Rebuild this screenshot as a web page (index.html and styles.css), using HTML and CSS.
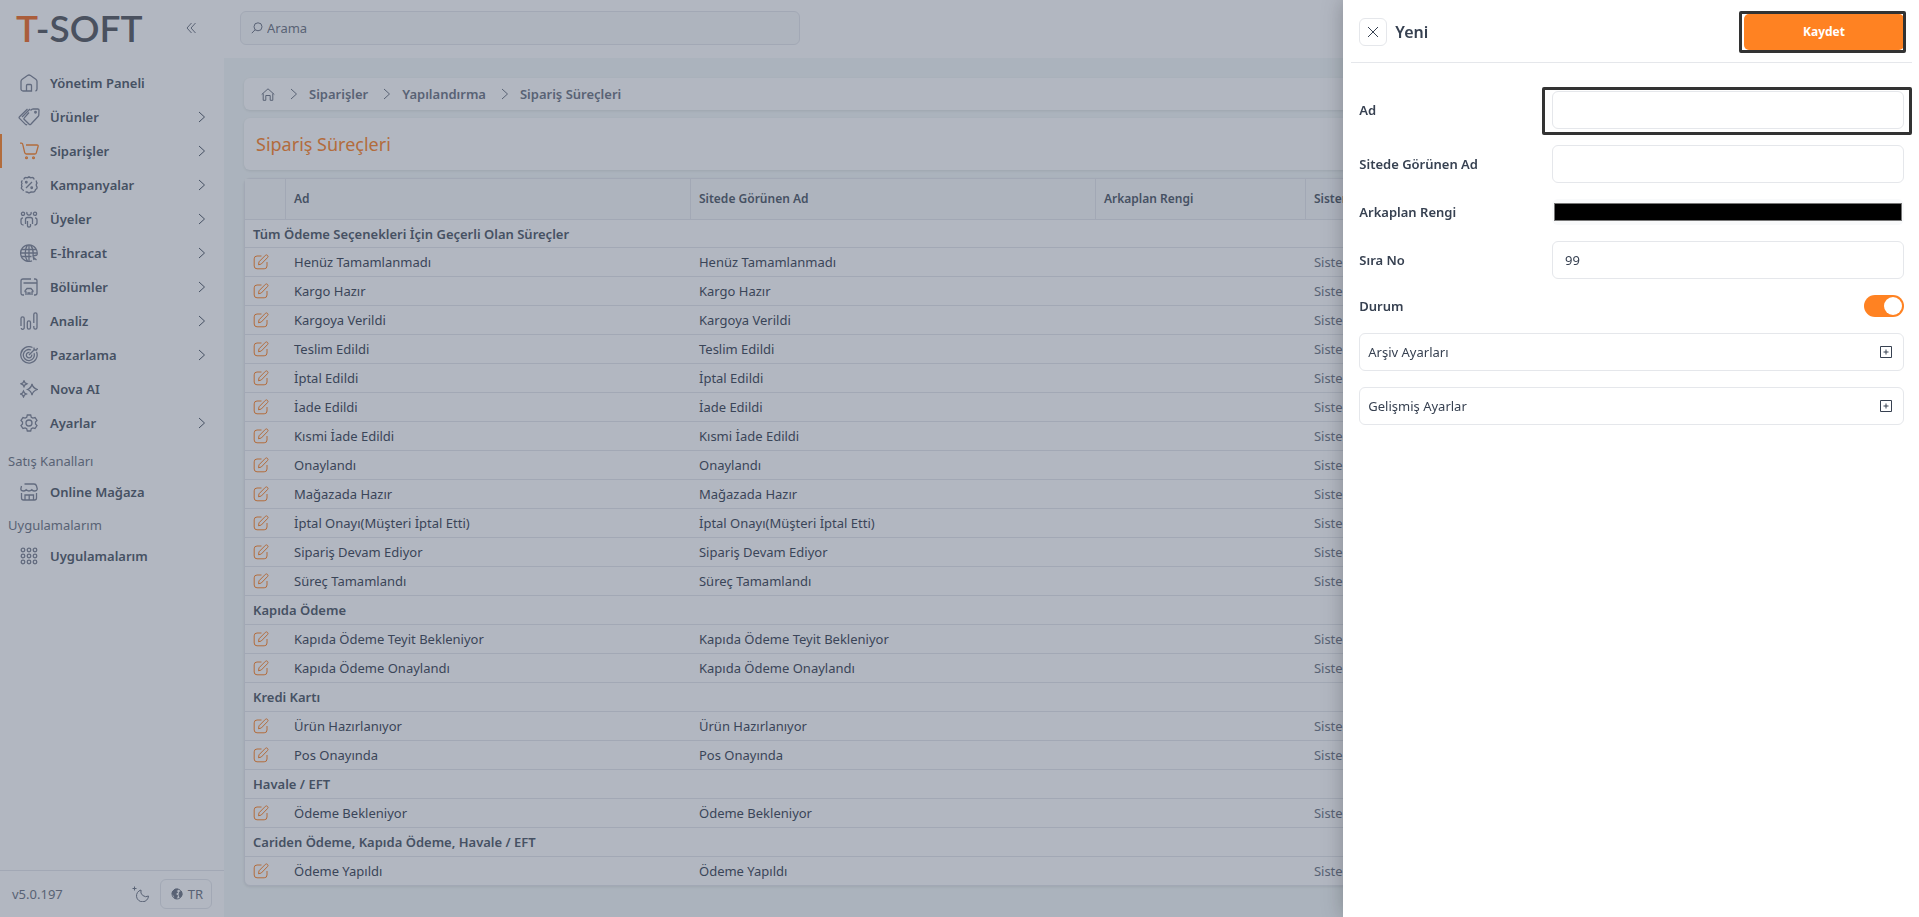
FILE: index.html
```
<!DOCTYPE html>
<html lang="tr">
<head>
    <meta charset="UTF-8">
    <meta name="viewport" content="width=device-width, initial-scale=1.0">
    <title>Sipariş Süreçleri</title>
    <link rel="stylesheet" href="styles.css">
</head>
<body>
    <svg class="sprite" aria-hidden="true">
        <symbol id="edit" viewBox="0 0 16 16">
            <path d="M8.500 2H4a2.800 2.800 0 0 0-2.800 2.800V12A2.800 2.800 0 0 0 4 14.800h7.200A2.800 2.800 0 0 0 14 12V8"/>
            <path d="M5.500 10.800l.5-3L12.300 1.400a1.500 1.500 0 0 1 2.200 2.200L8.300 10z"/>
        </symbol>
        <symbol id="chevron" viewBox="0 0 8 12"><path d="M1 1l5.500 5L1 11"/></symbol>
        <symbol id="plus" viewBox="0 0 14 14"><path d="M1.500 1.500h11v11h-11zM7 4.500v5M4.500 7h5"/></symbol>
    </svg>

    <div class="app">
        <aside class="sidebar">
            <div class="brand">
                <a href="#" class="logo"><span>T</span>-SOFT</a>
                <button class="collapse" aria-label="Menüyü daralt">
                    <svg viewBox="0 0 10 12" width="10" height="12"><path d="M5.500 1L1 6l4.500 5M9.500 1L5 6l4.500 5"/></svg>
                </button>
            </div>
            <nav class="menu">
                <a href="#" class="item">
                    <svg class="icon" viewBox="0 0 18 18"><path d="M4.500 17H3a2 2 0 0 1-2-2V7.500Q1 6 2.200 5.200L7.500 1.500Q9 .5 10.500 1.500l5.300 3.700Q17 6 17 7.500V15a2 2 0 0 1-1.500 2M6.500 17v-5.500a1 1 0 0 1 1-1h3a1 1 0 0 1 1 1V17H4.500"/></svg>
                    Yönetim Paneli
                </a>
                <a href="#" class="item">
                    <svg class="icon wide" viewBox="0 0 22 18"><path d="M12.500 2.500L14 1.200q.5-.4 1.200-.4L20 1q1 0 1 1l-.2 5q0 .7-.5 1.200l-7.500 8q-.8.8-1.600 0L6.300 11.500q-.8-.8 0-1.600L11 4.500M9.500 1L1.500 8.800q-.8.8 0 1.600l6 6q.8.8 1.600 0M12 1L4 9"/><circle cx="17.500" cy="4.300" r=".8"/></svg>
                    Ürünler
                    <svg class="arrow"><use href="#chevron"/></svg>
                </a>
                <a href="#" class="item active">
                    <svg class="icon wide" viewBox="0 0 22 18"><path d="M2 1.200h1.500q1 0 1.200 1l2 8.500q.3 1.300 1.500 1.300h8.600q1.200 0 1.500-1.200l1.800-6.300Q20.500 3 19 3H8"/><circle cx="8.500" cy="15.800" r=".9"/><circle cx="15.500" cy="15.800" r=".9"/></svg>
                    Siparişler
                    <svg class="arrow"><use href="#chevron"/></svg>
                </a>
                <a href="#" class="item">
                    <svg class="icon" viewBox="0 0 18 18"><path d="M4 3.500q0-2 2-2 1.500.8 3-.7 1.500 1.500 3 .7 2 0 2 2M16.500 4.500q-.5 1.500.5 2.500-1.500 2 0 4 .5 1.800-1.500 2.500-.3 2.500-2.500 2.700-2-.7-4 .8-2-1.500-3.500-.8M3.500 15q-.3-1.500-1.500-2-1.300-1 0-2.500-1-1.500 0-3-1.300-1.800.5-3M6 12l6-6"/><circle cx="6.300" cy="6.300" r=".8"/><circle cx="11.700" cy="11.700" r=".8"/></svg>
                    Kampanyalar
                    <svg class="arrow"><use href="#chevron"/></svg>
                </a>
                <a href="#" class="item">
                    <svg class="icon" viewBox="0 0 18 18"><circle cx="3" cy="3.800" r="1.600"/><circle cx="15" cy="3.800" r="1.600"/><path d="M7 2a2.200 2.200 0 1 0 4 0M3.500 15Q1 15 1 12.500V10q0-2.200 2-2.200M14.500 15q2.500 0 2.500-2.500V10q0-2.200-2-2.200M5.500 14V9.500q0-2 2-2h3q2 0 2 2V14M7.500 11v5q0 1 1.500 1t1.500-1v-2"/></svg>
                    Üyeler
                    <svg class="arrow"><use href="#chevron"/></svg>
                </a>
                <a href="#" class="item">
                    <svg class="icon" viewBox="0 0 18 18"><path d="M17 11A8.300 8.300 0 1 0 12 16.800M1.500 5.500h15M1.500 12.500h10M.8 9h16M7.500 1C4.500 5 4.500 13 7.500 17M10.500 1c2.500 3 3 7 2.500 11M9 1v16M13 13l3.500 3M17 11l-4 1 1 4"/></svg>
                    E-İhracat
                    <svg class="arrow"><use href="#chevron"/></svg>
                </a>
                <a href="#" class="item">
                    <svg class="icon" viewBox="0 0 18 18"><path d="M4 17H3q-2 0-2-2V3q0-2 2-2h8M14 1h1q2 0 2 2v12q0 2-2 2h-1M3.500 5H17M6 17v-3q-1.500 0-.8-1.500L7 10.500h4l1.800 2q.7 1.500-.8 1.500v3M8 17v-2h2v2"/></svg>
                    Bölümler
                    <svg class="arrow"><use href="#chevron"/></svg>
                </a>
                <a href="#" class="item">
                    <svg class="icon" viewBox="0 0 18 18"><path d="M1 14V6.500a1.500 1.500 0 0 1 3.200 0v9a1.500 1.500 0 0 1-3 .5M7.300 15.500v-5a1.600 1.600 0 0 1 3.200 0v5a1.600 1.600 0 0 1-3.200 0M13.800 11V2.500a1.500 1.500 0 0 1 3.200 0v13a1.500 1.500 0 0 1-3.200 0V14"/></svg>
                    Analiz
                    <svg class="arrow"><use href="#chevron"/></svg>
                </a>
                <a href="#" class="item">
                    <svg class="icon" viewBox="0 0 18 18"><path d="M12.500 1.500a8.200 8.200 0 1 0 4 4.200M11 4a5.500 5.500 0 1 0 3 3.200M9.500 6.500a2.700 2.700 0 1 0 2.200 2.200M9 9l6-6M14 1.500V4h2.500L17.500 2"/></svg>
                    Pazarlama
                    <svg class="arrow"><use href="#chevron"/></svg>
                </a>
                <a href="#" class="item">
                    <svg class="icon" viewBox="0 0 18 18"><path d="M4 .8l1 2 2 1-2 1-1 2-1-2-2-1 2-1zM3.500 11l1 2 2 1-2 1-1 2-1-2-2-1 2-1zM12 4q.8 4 5.500 5.500Q12.800 11 12 15q-.8-4-4.500-5.500Q11.200 8 12 4z"/></svg>
                    Nova AI
                </a>
                <a href="#" class="item">
                    <svg class="icon" viewBox="0 0 18 18"><circle cx="9" cy="9" r="3"/><path d="M7.300 1h3.400l.6 2.300 1.500.8L15 3.500l2 3L15.500 8v2l1.500 1.500-2 3-2.200-.6-1.500.8-.6 2.300H7.300l-.6-2.300-1.500-.8-2.200.6-2-3L2.500 10V8L1 6.500l2-3 2.200.6 1.500-.8z"/></svg>
                    Ayarlar
                    <svg class="arrow"><use href="#chevron"/></svg>
                </a>
                <h2>Satış Kanalları</h2>
                <a href="#" class="item">
                    <svg class="icon" viewBox="0 0 18 18"><path d="M4.500 1H14q2 0 2.500 2l.8 3q-.3 2-2.800 2-1.500 0-2.700-1.300Q10.500 8 9 8 7.500 8 6.200 6.700 5 8 3.500 8 1 8 .8 6l.7-3M1.500 10v5q0 2 2 2h11q2 0 2-2v-5M5 16.500V12h8.500v4.500M9.200 12v4.500"/></svg>
                    Online Mağaza
                </a>
                <h2>Uygulamalarım</h2>
                <a href="#" class="item">
                    <svg class="icon" viewBox="0 0 18 18"><circle cx="3" cy="3" r="1.800"/><circle cx="9" cy="3" r="1.800"/><circle cx="15" cy="3" r="1.800"/><circle cx="3" cy="9" r="1.800"/><circle cx="9" cy="9" r="1.800"/><circle cx="15" cy="9" r="1.800"/><circle cx="3" cy="15" r="1.800"/><circle cx="9" cy="15" r="1.800"/><circle cx="15" cy="15" r="1.800"/></svg>
                    Uygulamalarım
                </a>
            </nav>
            <div class="side-footer">
                <span class="version">v5.0.197</span>
                <button class="theme" aria-label="Karanlık mod">
                    <svg viewBox="0 0 18 16" width="18" height="16"><path d="M9 4a5.200 5.200 0 0 0 7.500 6A6 6 0 1 1 9 4zM2.500.5v4M.5 2.500h4"/></svg>
                </button>
                <button class="lang">
                    <svg viewBox="0 0 12 12" width="12" height="12"><circle cx="6" cy="6" r="5"/><path class="land" d="M1.500 3.500L4 1.200h3L5.500 3 6.500 4.500 4 6l2.500 1.500-1 3H4L3 7.500 1.200 6zM8.500 4l2-.5.5 3.500-2 2.500L8 7z"/></svg>
                    TR
                </button>
            </div>
        </aside>

        <div class="main">
            <header class="topbar">
                <label class="search">
                    <svg viewBox="0 0 12 12" width="12" height="12"><circle cx="7" cy="4.800" r="4"/><path d="M4.200 7.700L.8 11.200"/></svg>
                    <input type="search" placeholder="Arama" aria-label="Arama">
                </label>
            </header>

            <main class="content">
                <nav class="breadcrumb">
                    <a href="#" aria-label="Ana sayfa"><svg class="home" viewBox="0 0 14 13"><path d="M.7 6.500L7 .8l6.300 5.700M2.200 5.500v6.800h2.600V7.500h4.400v4.800h2.600V5.500"/></svg></a>
                    <svg class="arrow"><use href="#chevron"/></svg>
                    <a href="#">Siparişler</a>
                    <svg class="arrow"><use href="#chevron"/></svg>
                    <a href="#">Yapılandırma</a>
                    <svg class="arrow"><use href="#chevron"/></svg>
                    <a href="#">Sipariş Süreçleri</a>
                </nav>
                <h1 class="page-title">Sipariş Süreçleri</h1>

                <table class="grid">
                    <colgroup>
                        <col class="col-edit"><col class="col-name"><col class="col-name"><col class="col-color"><col>
                    </colgroup>
                    <thead>
                        <tr><th></th><th>Ad</th><th>Sitede Görünen Ad</th><th>Arkaplan Rengi</th><th>Sistem</th></tr>
                    </thead>
                    <tbody>
                        <tr class="group"><td colspan="5">Tüm Ödeme Seçenekleri İçin Geçerli Olan Süreçler</td></tr>
                        <tr><td><button class="edit" aria-label="Düzenle"><svg><use href="#edit"/></svg></button></td><td>Henüz Tamamlanmadı</td><td>Henüz Tamamlanmadı</td><td></td><td>Sistem</td></tr>
                        <tr><td><button class="edit" aria-label="Düzenle"><svg><use href="#edit"/></svg></button></td><td>Kargo Hazır</td><td>Kargo Hazır</td><td></td><td>Sistem</td></tr>
                        <tr><td><button class="edit" aria-label="Düzenle"><svg><use href="#edit"/></svg></button></td><td>Kargoya Verildi</td><td>Kargoya Verildi</td><td></td><td>Sistem</td></tr>
                        <tr><td><button class="edit" aria-label="Düzenle"><svg><use href="#edit"/></svg></button></td><td>Teslim Edildi</td><td>Teslim Edildi</td><td></td><td>Sistem</td></tr>
                        <tr><td><button class="edit" aria-label="Düzenle"><svg><use href="#edit"/></svg></button></td><td>İptal Edildi</td><td>İptal Edildi</td><td></td><td>Sistem</td></tr>
                        <tr><td><button class="edit" aria-label="Düzenle"><svg><use href="#edit"/></svg></button></td><td>İade Edildi</td><td>İade Edildi</td><td></td><td>Sistem</td></tr>
                        <tr><td><button class="edit" aria-label="Düzenle"><svg><use href="#edit"/></svg></button></td><td>Kısmi İade Edildi</td><td>Kısmi İade Edildi</td><td></td><td>Sistem</td></tr>
                        <tr><td><button class="edit" aria-label="Düzenle"><svg><use href="#edit"/></svg></button></td><td>Onaylandı</td><td>Onaylandı</td><td></td><td>Sistem</td></tr>
                        <tr><td><button class="edit" aria-label="Düzenle"><svg><use href="#edit"/></svg></button></td><td>Mağazada Hazır</td><td>Mağazada Hazır</td><td></td><td>Sistem</td></tr>
                        <tr><td><button class="edit" aria-label="Düzenle"><svg><use href="#edit"/></svg></button></td><td>İptal Onayı(Müşteri İptal Etti)</td><td>İptal Onayı(Müşteri İptal Etti)</td><td></td><td>Sistem</td></tr>
                        <tr><td><button class="edit" aria-label="Düzenle"><svg><use href="#edit"/></svg></button></td><td>Sipariş Devam Ediyor</td><td>Sipariş Devam Ediyor</td><td></td><td>Sistem</td></tr>
                        <tr><td><button class="edit" aria-label="Düzenle"><svg><use href="#edit"/></svg></button></td><td>Süreç Tamamlandı</td><td>Süreç Tamamlandı</td><td></td><td>Sistem</td></tr>
                        <tr class="group"><td colspan="5">Kapıda Ödeme</td></tr>
                        <tr><td><button class="edit" aria-label="Düzenle"><svg><use href="#edit"/></svg></button></td><td>Kapıda Ödeme Teyit Bekleniyor</td><td>Kapıda Ödeme Teyit Bekleniyor</td><td></td><td>Sistem</td></tr>
                        <tr><td><button class="edit" aria-label="Düzenle"><svg><use href="#edit"/></svg></button></td><td>Kapıda Ödeme Onaylandı</td><td>Kapıda Ödeme Onaylandı</td><td></td><td>Sistem</td></tr>
                        <tr class="group"><td colspan="5">Kredi Kartı</td></tr>
                        <tr><td><button class="edit" aria-label="Düzenle"><svg><use href="#edit"/></svg></button></td><td>Ürün Hazırlanıyor</td><td>Ürün Hazırlanıyor</td><td></td><td>Sistem</td></tr>
                        <tr><td><button class="edit" aria-label="Düzenle"><svg><use href="#edit"/></svg></button></td><td>Pos Onayında</td><td>Pos Onayında</td><td></td><td>Sistem</td></tr>
                        <tr class="group"><td colspan="5">Havale / EFT</td></tr>
                        <tr><td><button class="edit" aria-label="Düzenle"><svg><use href="#edit"/></svg></button></td><td>Ödeme Bekleniyor</td><td>Ödeme Bekleniyor</td><td></td><td>Sistem</td></tr>
                        <tr class="group"><td colspan="5">Cariden Ödeme, Kapıda Ödeme, Havale / EFT</td></tr>
                        <tr><td><button class="edit" aria-label="Düzenle"><svg><use href="#edit"/></svg></button></td><td>Ödeme Yapıldı</td><td>Ödeme Yapıldı</td><td></td><td>Sistem</td></tr>
                    </tbody>
                </table>
            </main>
        </div>
    </div>

    <div class="overlay"></div>

    <form class="drawer">
        <div class="drawer-header">
            <button type="button" class="close" aria-label="Kapat">
                <svg viewBox="0 0 12 12" width="12" height="12"><path d="M1 1l10 10M11 1L1 11"/></svg>
            </button>
            <h2>Yeni</h2>
            <div class="save-wrap marked"><button type="submit" class="save">Kaydet</button></div>
        </div>
        <div class="drawer-body">
            <div class="field">
                <label for="ad">Ad</label>
                <div class="control marked"><input type="text" id="ad"></div>
            </div>
            <div class="field">
                <label for="gorunen">Sitede Görünen Ad</label>
                <div class="control"><input type="text" id="gorunen"></div>
            </div>
            <div class="field">
                <label for="renk">Arkaplan Rengi</label>
                <div class="control"><input type="color" id="renk" value="#000000"></div>
            </div>
            <div class="field">
                <label for="sira">Sıra No</label>
                <div class="control"><input type="text" id="sira" value="99"></div>
            </div>
            <div class="field">
                <label for="durum">Durum</label>
                <input type="checkbox" id="durum" class="toggle" checked>
            </div>
            <button type="button" class="accordion">Arşiv Ayarları <svg><use href="#plus"/></svg></button>
            <button type="button" class="accordion">Gelişmiş Ayarlar <svg><use href="#plus"/></svg></button>
        </div>
    </form>
</body>
</html>
```
FILE: styles.css
```
:root {
    --orange: #ff8222;
    --text: #374151;
    --muted: #6b7280;
    --border: #e5e7eb;
    --page: #f4f9f8;
}
* {
    box-sizing: border-box;
}
body {
    margin: 0;
    font-family: 'Segoe UI', 'Noto Sans', sans-serif;
    font-size: 13px;
    line-height: 20px;
    color: var(--text);
    overflow: hidden;
}
button,
input {
    font: inherit;
    color: inherit;
}
button {
    padding: 0;
    border: none;
    background: none;
    cursor: pointer;
}
a {
    color: inherit;
    text-decoration: none;
}
h1,
h2 {
    margin: 0;
    font-weight: 400;
}
svg {
    fill: none;
    stroke: currentColor;
    stroke-width: 1;
    flex-shrink: 0;
}
.sprite {
    display: none;
}
.app {
    display: flex;
    height: 100vh;
}

/* sidebar */
.sidebar {
    width: 224px;
    flex-shrink: 0;
    display: flex;
    flex-direction: column;
    background: #fff;
}
.brand {
    display: flex;
    align-items: center;
    justify-content: space-between;
    height: 56px;
    padding: 0 28px 0 16px;
}
.logo {
    font-family: Lato, sans-serif;
    font-size: 37px;
    line-height: 56px;
    font-weight: 600;
    color: #52555c;
}
.logo span {
    color: #f26a21;
}
.collapse {
    display: flex;
    color: var(--muted);
}
.menu {
    flex: 1;
    padding-top: 10px;
    color: #4b5563;
}
.item {
    display: flex;
    align-items: center;
    gap: 12px;
    height: 34px;
    padding: 0 18px 0 20px;
    font-weight: 600;
}
.item .icon {
    width: 18px;
    height: 18px;
    color: #7b8191;
    stroke-width: 1.3;
}
.item .icon.wide {
    width: 22px;
    margin: 0 -2px;
}
.item.active {
    box-shadow: inset 2px 0 var(--orange);
}
.item.active .icon {
    color: var(--orange);
}
.arrow {
    width: 8px;
    height: 12px;
}
.item .arrow {
    margin-left: auto;
}
.menu h2 {
    height: 30px;
    padding: 6px 8px 0;
    font-size: 13px;
    color: var(--muted);
}
.menu h2:first-of-type {
    margin-top: 5px;
}
.side-footer {
    display: flex;
    align-items: center;
    height: 47px;
    padding: 0 12px;
    border-top: 1px solid var(--border);
    color: var(--muted);
}
.theme {
    display: flex;
    margin-left: auto;
    margin-right: 10px;
}
.lang {
    display: flex;
    align-items: center;
    gap: 5px;
    height: 30px;
    padding: 0 8px 0 10px;
    border: 1px solid var(--border);
    border-radius: 6px;
}
.lang .land {
    fill: currentColor;
}

/* page */
.main {
    flex: 1;
    display: flex;
    flex-direction: column;
    min-width: 0;
}
.topbar {
    height: 58px;
    padding: 11px 16px;
    background: #fff;
}
.search {
    display: flex;
    align-items: center;
    gap: 4px;
    width: 560px;
    height: 34px;
    padding: 0 10px;
    border: 1px solid var(--border);
    border-radius: 6px;
    background: #f9fafb;
    color: var(--muted);
}
.search input {
    flex: 1;
    padding: 0;
    border: none;
    outline: none;
    background: none;
}
.search input::placeholder {
    color: var(--muted);
}
.content {
    flex: 1;
    display: flex;
    flex-direction: column;
    gap: 8px;
    padding: 20px;
    background: var(--page);
}
.breadcrumb,
.page-title {
    display: flex;
    align-items: center;
    border-radius: 6px;
    background: #fff;
    box-shadow: 0 1px 3px rgba(0, 0, 0, 0.1);
}
.breadcrumb {
    gap: 11px;
    height: 32px;
    padding: 0 17px;
    font-weight: 600;
    color: var(--muted);
}
.breadcrumb .arrow {
    margin-left: 4px;
}
.home {
    display: block;
    width: 14px;
    height: 13px;
}
.page-title {
    height: 52px;
    padding: 0 12px;
    font-size: 18px;
    color: var(--orange);
}
.grid {
    width: 100%;
    table-layout: fixed;
    border-collapse: separate;
    border-spacing: 0;
    border: 1px solid var(--border);
    border-radius: 6px;
    background: #fff;
    box-shadow: 0 1px 3px rgba(0, 0, 0, 0.1);
}
.col-edit {
    width: 41px;
}
.col-name {
    width: 24.5%;
}
.col-color {
    width: 12.7%;
}
.grid th {
    height: 40px;
    padding: 0 8px;
    border-right: 1px solid var(--border);
    background: #f9fafb;
    font-size: 12px;
    font-weight: 600;
    text-align: left;
    color: #4b5563;
}
.grid td {
    height: 29px;
    padding: 0 8px;
    border-top: 1px solid var(--border);
}
.grid tr:first-child td {
    height: 28px;
}
.grid td:last-child {
    color: var(--muted);
}
.grid .group td {
    font-weight: 600;
    color: #4b5563;
}
.edit {
    display: flex;
    color: var(--orange);
}
.edit svg {
    width: 16px;
    height: 16px;
}
.overlay {
    position: fixed;
    inset: 0;
    background: rgba(63, 75, 100, 0.4);
}

/* drawer */
.drawer {
    position: fixed;
    top: 0;
    right: 0;
    bottom: 0;
    width: 30%;
    background: #fff;
    box-shadow: 0 0 20px rgba(0, 0, 0, 0.25);
}
.drawer-header {
    display: flex;
    align-items: center;
    gap: 8px;
    height: 63px;
    margin: 0 7px 0 8px;
    padding: 2px 8px 0;
    border-bottom: 1px solid var(--border);
}
.close {
    display: flex;
    align-items: center;
    justify-content: center;
    width: 28px;
    height: 28px;
    border: 1px solid var(--border);
    border-radius: 6px;
}
.drawer-header h2 {
    flex: 1;
    font-size: 16px;
    font-weight: 600;
}
.save {
    display: block;
    width: 160px;
    height: 36px;
    border-radius: 5px;
    background: var(--orange);
    color: #fff;
    font-size: 12px;
    font-weight: 700;
}
.marked {
    position: relative;
}
.marked::after {
    content: '';
    position: absolute;
    inset: -4px -8px -6px -10px;
    border: 3px solid #333;
    border-radius: 2px;
    pointer-events: none;
}
.save-wrap.marked::after {
    inset: -3px -2px -3px -5px;
}
.drawer-body {
    display: flex;
    flex-direction: column;
    gap: 16px;
    padding: 28px 15px 16px 16px;
}
.field {
    display: flex;
    align-items: center;
    justify-content: space-between;
}
.field label {
    font-weight: 600;
}
.control {
    width: 352px;
}
.control input {
    display: block;
    width: 100%;
    height: 38px;
    padding: 0 12px;
    border: 1px solid var(--border);
    border-radius: 6px;
    background: #fff;
    outline: none;
}
.control input[type="color"] {
    height: 26px;
    padding: 0;
    border: none;
    background: #f9fafb;
}
.toggle {
    appearance: none;
    display: flex;
    justify-content: flex-end;
    width: 40px;
    height: 22px;
    margin: 0;
    padding: 2px;
    border-radius: 11px;
    background: var(--orange);
}
.toggle::before {
    content: '';
    width: 18px;
    height: 18px;
    border-radius: 50%;
    background: #fff;
}
.accordion {
    display: flex;
    align-items: center;
    justify-content: space-between;
    height: 38px;
    padding: 0 10px 0 8px;
    border: 1px solid var(--border);
    border-radius: 6px;
}
.accordion svg {
    width: 14px;
    height: 14px;
}
```
